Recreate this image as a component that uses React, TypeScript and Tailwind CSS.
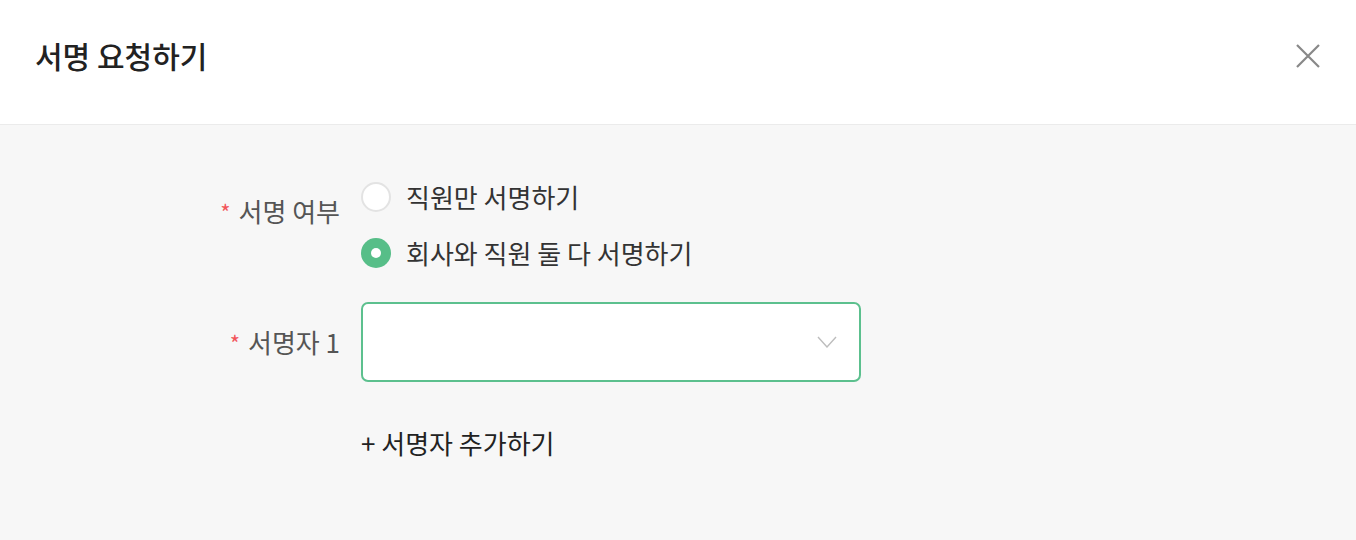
import React, { useState } from 'react';

const font = { fontFamily: '"Noto Sans CJK KR", "Noto Sans", sans-serif' };

const Radio: React.FC<{ checked: boolean; label: string; onClick: () => void }> = ({ checked, label, onClick }) => (
  <button type="button" onClick={onClick} className="flex items-center gap-[15px] h-[30px] text-left">
    {checked ? (
      <span className="w-[30px] h-[30px] rounded-full bg-[#57be88] flex items-center justify-center shrink-0">
        <span className="w-[10px] h-[10px] rounded-full bg-white" />
      </span>
    ) : (
      <span className="w-[30px] h-[30px] rounded-full bg-white border-2 border-[#e3e3e3] shrink-0" />
    )}
    <span className="text-[26px] leading-[30px] text-[#333] whitespace-nowrap">{label}</span>
  </button>
);

export default function App() {
  const [mode, setMode] = useState(1);

  return (
    <div className="w-[1356px] h-[540px] bg-[#f7f7f7] flex flex-col" style={font}>
      {/* Header */}
      <div className="h-[125px] bg-white border-b border-[#ebebeb] flex items-start justify-between pl-[35px] pr-[36px] pt-[34px] shrink-0">
        <h1 className="text-[30px] leading-[42px] text-[#222] font-medium">서명 요청하기</h1>
        <button type="button" className="mt-[10px] text-[#888]">
          <svg width="24" height="24" viewBox="0 0 24 24" fill="none" stroke="currentColor" strokeWidth="2.2">
            <path d="M1 1 L23 23 M23 1 L1 23" />
          </svg>
        </button>
      </div>

      {/* Form */}
      <div className="flex flex-col pt-[57px]">
        <div className="flex">
          <label className="w-[340px] text-right pt-[11px] text-[26px] leading-[36px] text-[#555] whitespace-nowrap">
            <span className="text-[#f2555a] text-[22px] mr-[8px] align-top">*</span>서명 여부
          </label>
          <div className="ml-[21px] flex flex-col gap-[26px]">
            <Radio checked={mode === 0} label="직원만 서명하기" onClick={() => setMode(0)} />
            <Radio checked={mode === 1} label="회사와 직원 둘 다 서명하기" onClick={() => setMode(1)} />
          </div>
        </div>

        <div className="flex items-center mt-[34px]">
          <label className="w-[340px] text-right text-[26px] leading-[36px] text-[#555] whitespace-nowrap">
            <span className="text-[#f2555a] text-[22px] mr-[8px] align-top">*</span>서명자 1
          </label>
          <div className="ml-[21px] w-[500px] h-[80px] bg-white border-2 border-[#5cc08e] rounded-[7px] flex items-center justify-end pr-[22px]">
            <svg width="20" height="12" viewBox="0 0 20 12" fill="none" stroke="#bdbdbd" strokeWidth="1.4">
              <path d="M1 1 L10 11 L19 1" />
            </svg>
          </div>
        </div>

        <div className="flex mt-[43px]">
          <div className="w-[340px]" />
          <button type="button" className="ml-[21px] text-[26px] leading-[36px] text-[#222] whitespace-nowrap">+ 서명자 추가하기</button>
        </div>
      </div>
    </div>
  );
}
